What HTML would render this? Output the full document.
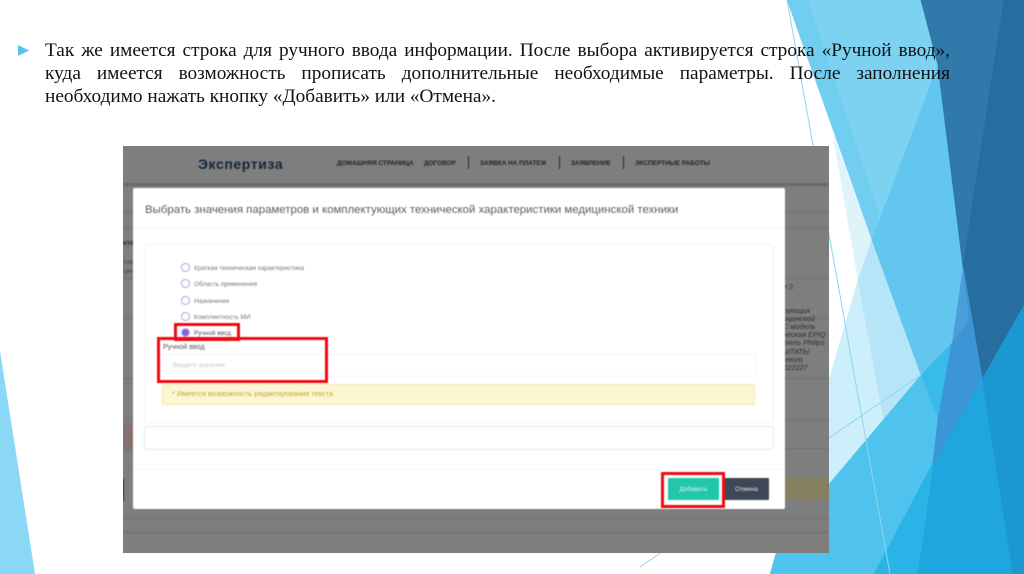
<!DOCTYPE html>
<html lang="ru"><head><meta charset="utf-8"><title>Экспертиза</title>
<style>
html,body{margin:0;padding:0;background:#fff}
#s{position:relative;width:1024px;height:574px;overflow:hidden;background:#fff;font-family:"Liberation Sans",sans-serif}
#bg{position:absolute;left:0;top:0}
.l{position:absolute;left:45px;width:905px;font:19.3px/23px "Liberation Serif",serif;color:#111;text-align:justify;text-align-last:justify;white-space:nowrap;filter:blur(.25px)}
#shot{position:absolute;left:123px;top:146px;width:706px;height:407px;background:#7e7e7e;overflow:hidden}
#shot div,#shot span{position:absolute;white-space:nowrap}
#inner{left:0;top:0;width:706px;height:407px;filter:blur(.45px)}
.nav{font-size:6.4px;font-weight:bold;color:#222;top:14px;line-height:8px}
.sep{width:1px;height:13px;top:10px;background:#2a2a2a}
.hl{left:0;width:706px;height:1px;background:#727272}
.rt{font-size:7.4px;line-height:9px;font-style:italic;color:#2e2e2e}
.r{width:7px;height:7px;border:1.3px solid #b79ad8;border-radius:50%;left:48px;background:#fff}
.t{font-size:6.4px;line-height:9px;color:#777;left:61px}
.red{border:3px solid #ee0a12;box-sizing:border-box}
</style></head><body>
<div id="s">
<svg id="bg" width="1024" height="574" viewBox="0 0 1024 574">
<polygon points="0,351 35,574 0,574" fill="#8ad8f6"/>
<polygon points="921,0 1024,0 1024,574 874,574 921,375 938,65" fill="#2f79ab"/>
<polygon points="938,420 1024,420 1024,574 874,574 887,550" fill="#1fa6de"/>
<polygon points="833,135 858,280 872,240" fill="#dff3fb" stroke="#dff3fb" stroke-width=".4"/>
<polygon points="858,280 829,380 829,486 884,421" fill="#cdeefb" stroke="#cdeefb" stroke-width=".6"/>
<polygon points="872,240 858,280 884,421 923,375" fill="#b7e5f8" stroke="#b7e5f8" stroke-width=".6"/>
<polygon points="787,0 925,0 940,65 872,240" fill="#7dd2f2" stroke="#7dd2f2" stroke-width=".4"/>
<polygon points="787,0 808,0 880,215 872,240" fill="#71cef1"/>
<polygon points="938,65 872,240 921,375 952,343 963,267" fill="#62c6ee" stroke="#62c6ee" stroke-width=".6"/>
<polygon points="921,375 952,343 938,420" fill="#38bbe9" stroke="#38bbe9" stroke-width=".4"/>
<polygon points="829,484 921,375 938,420 933,463 887,550 875,574 770,574 776,553 829,553" fill="#4fc3ee" stroke="#4fc3ee" stroke-width=".4"/>
<polygon points="933,463 887,550 874,574 918,574" fill="#2ab3e6" stroke="#2ab3e6" stroke-width=".8"/>
<polygon points="935,461 982,378 1013,574 918,574" fill="#1fa6de" stroke="#1fa6de" stroke-width=".8"/>
<polygon points="982,378 1024,304 1024,574 1013,574" fill="#1a98cf" stroke="#1a98cf" stroke-width=".4"/>
<polygon points="921,0 1004,0 966,284 963,267 938,65" fill="#2f79ab" stroke="#2f79ab" stroke-width=".8"/>
<polygon points="1004,0 1024,0 1024,304 982,378 966,284 963,267" fill="#266da0" stroke="#266da0" stroke-width=".8"/>
<polygon points="952,343 969,320 963,267 982,378 935,461 933,463 938,420" fill="#3c95d5" stroke="#3c95d5" stroke-width=".8"/>
<polygon points="963,267 969,320 952,343" fill="#4a9fd8"/>
<line x1="787" y1="0" x2="890" y2="574" stroke="#8fd5ee" stroke-width="1"/>
<line x1="640" y1="567" x2="921" y2="375" stroke="#8fd5ee" stroke-width="1"/>
<polygon points="18,45 29,50.5 18,56" fill="#5cc3ee"/>
</svg>
<div class="l" style="top:39px">Так же имеется строка для ручного ввода информации. После выбора активируется строка «Ручной ввод»,</div>
<div class="l" style="top:62px">куда имеется возможность прописать дополнительные необходимые параметры. После заполнения</div>
<div class="l" style="top:85px;text-align-last:left">необходимо нажать кнопку «Добавить» или «Отмена».</div>
<div id="shot"><div id="inner">
<div class="hl" style="top:37px;height:3px;background:#6a6a6a"></div>
<div class="hl" style="top:66px"></div><div class="hl" style="top:82px"></div><div class="hl" style="top:132px"></div>
<div class="hl" style="top:172px"></div><div class="hl" style="top:232px"></div><div class="hl" style="top:274px"></div>
<div class="hl" style="top:302px"></div><div class="hl" style="top:372px"></div><div class="hl" style="top:386px;background:#6e6e6e"></div>
<span style="left:75px;top:9px;font-size:14px;line-height:18px;font-weight:bold;color:#14273a;letter-spacing:.6px">Экспертиза</span>
<span class="nav" style="left:214px">ДОМАШНЯЯ СТРАНИЦА</span>
<span class="nav" style="left:301px">ДОГОВОР</span>
<div class="sep" style="left:345px"></div>
<span class="nav" style="left:357px">ЗАЯВКА НА ПЛАТЕЖ</span>
<div class="sep" style="left:436px"></div>
<span class="nav" style="left:448px">ЗАЯВЛЕНИЕ</span>
<div class="sep" style="left:500px"></div>
<span class="nav" style="left:512px">ЭКСПЕРТНЫЕ РАБОТЫ</span>
<div style="left:0;top:278px;width:10px;height:26px;background:#857070"></div>
<div style="left:0;top:333px;width:1px;height:22px;background:#2c3540"></div>
<div style="left:660px;top:332px;width:46px;height:21px;background:#85805f"></div>
<span style="left:0;top:94px;font-size:7px;font-weight:bold;color:#333">кте</span>
<span style="left:0;top:112px;font-size:6.5px;line-height:9px;color:#444">тов<br>цин</span>
<span class="rt" style="left:660px;top:136px;font-style:normal">и 2</span>
<span class="rt" style="left:660px;top:160px">рующих</span>
<span class="rt" style="left:660px;top:168px">ицинской</span>
<span class="rt" style="left:660px;top:176px">С модель</span>
<span class="rt" style="left:660px;top:184px">ческая EPIQ</span>
<span class="rt" style="left:660px;top:192px">тель Philips</span>
<span class="rt" style="left:660px;top:201px">ШТАТЫ</span>
<span class="rt" style="left:660px;top:209px">чного</span>
<span class="rt" style="left:660px;top:217px">022227</span>

<div style="left:10px;top:42px;width:652px;height:321px;background:#fff;border-radius:2px">
<span style="left:12px;top:14px;font-size:11.43px;line-height:16px;color:#5c5c5c">Выбрать значения параметров и комплектующих технической характеристики медицинской техники</span>
<div style="left:0;top:40px;width:652px;height:1px;background:#f5f5f5"></div>
<div style="left:11px;top:56px;width:628px;height:177px;border:1px solid #f1f1f1;border-radius:3px"></div>
<div style="left:11px;top:238px;width:628px;height:22px;border:1px solid #e8e8e8;border-radius:3px"></div>
<div style="left:0;top:281px;width:652px;height:1px;background:#f7f7f7"></div>

<div class="r" style="top:75px"></div><span class="t" style="top:76px">Краткая техническая характеристика</span>
<div class="r" style="top:91px"></div><span class="t" style="top:92px">Область применения</span>
<div class="r" style="top:108px"></div><span class="t" style="top:109px">Назначение</span>
<div class="r" style="top:124px"></div><span class="t" style="top:125px">Комплектность МИ</span>
<div class="r" style="top:140px;background:#7f68d8;border-color:#c9b0e6"></div><span class="t" style="top:141px;color:#555">Ручной ввод</span>

<span style="left:30px;top:154px;font-size:7.2px;line-height:10px;color:#555">Ручной ввод</span>
<div style="left:27px;top:166px;width:594px;height:21px;border:1px solid #f4f4f4"></div>
<span style="left:40px;top:173px;font-size:6.2px;line-height:9px;color:#c8c8c8">Введите значение</span>
<div style="left:29px;top:196px;width:591px;height:19px;background:#fdf6d2;border:1px solid #f3e8ad;border-radius:2px"></div>
<span style="left:39px;top:201px;font-size:7.33px;line-height:10px;color:#c6a43c">* Имеется возможность редактирования текста</span>

<div style="left:535px;top:290px;width:51px;height:22px;background:#22c7a9;border-radius:1px"></div>
<span style="left:535px;top:297px;width:51px;text-align:center;font-size:6.4px;line-height:9px;color:#dff5ef">Добавить</span>
<div style="left:591px;top:290px;width:45px;height:22px;background:#3d4756;border-radius:1px"></div>
<span style="left:591px;top:297px;width:45px;text-align:center;font-size:6.4px;line-height:9px;color:#dfe2e6">Отмена</span>
</div>

<div class="red" style="left:51px;top:177px;width:66px;height:18px"></div>
<div class="red" style="left:34px;top:191px;width:171px;height:46px"></div>
<div class="red" style="left:538px;top:326px;width:64px;height:36px"></div>
</div></div>
</div>
</body></html>
